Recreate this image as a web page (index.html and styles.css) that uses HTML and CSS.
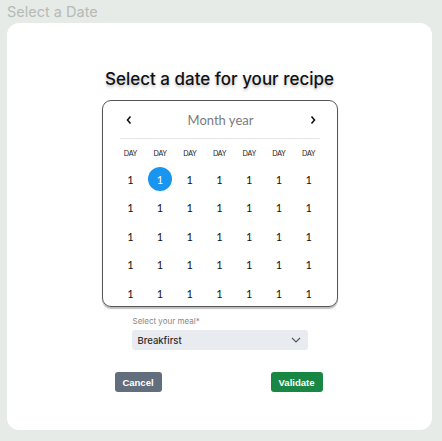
FILE: index.html
```html
<!DOCTYPE html>
<html>
<head>
<meta charset="utf-8">
<link rel="stylesheet" href="styles.css">
</head>
<body>
<div class="page">
  <div class="title">Select a Date</div>
  <div class="card">
    <h1 class="heading">Select a date for your recipe</h1>
    <div class="calendar">
      <div class="cal-head">
        <span class="nav"><svg width="8" height="10" viewBox="0 0 8 10"><path d="M5.5 1.5 L2.5 5 L5.5 8.5" fill="none" stroke="#111" stroke-width="1.6"/></svg></span>
        <span class="month">Month year</span>
        <span class="nav"><svg width="8" height="10" viewBox="0 0 8 10"><path d="M2.5 1.5 L5.5 5 L2.5 8.5" fill="none" stroke="#111" stroke-width="1.6"/></svg></span>
      </div>
      <div class="divider"></div>
      <div class="grid">
        <span class="dow">DAY</span><span class="dow">DAY</span><span class="dow">DAY</span><span class="dow">DAY</span><span class="dow">DAY</span><span class="dow">DAY</span><span class="dow">DAY</span>
        <span class="d">1</span><span class="d"><span class="sel">1</span></span><span class="d">1</span><span class="d">1</span><span class="d">1</span><span class="d">1</span><span class="d">1</span>
        <span class="d">1</span><span class="d">1</span><span class="d">1</span><span class="d">1</span><span class="d">1</span><span class="d">1</span><span class="d">1</span>
        <span class="d">1</span><span class="d">1</span><span class="d">1</span><span class="d">1</span><span class="d">1</span><span class="d">1</span><span class="d">1</span>
        <span class="d">1</span><span class="d">1</span><span class="d">1</span><span class="d">1</span><span class="d">1</span><span class="d">1</span><span class="d">1</span>
        <span class="d">1</span><span class="d">1</span><span class="d">1</span><span class="d">1</span><span class="d">1</span><span class="d">1</span><span class="d">1</span>
      </div>
    </div>
    <div class="meal">
      <label class="meal-label">Select your meal*</label>
      <div class="select">
        <span>Breakfirst</span>
        <svg width="10" height="6" viewBox="0 0 10 6"><path d="M1 1 L5 5 L9 1" fill="none" stroke="#555" stroke-width="1.1"/></svg>
      </div>
    </div>
    <div class="actions">
      <button class="btn cancel">Cancel</button>
      <button class="btn validate">Validate</button>
    </div>
  </div>
</div>
</body>
</html>
```

FILE: styles.css
```css
html, body {
  margin: 0;
  padding: 0;
  background: #e6ebe7;
  height: 100%;
}
.page {
  padding: 0 10px 0 7px;
  font-family: Inter, "Liberation Sans", sans-serif;
}
.title {
  height: 23px;
  line-height: 24px;
  font-size: 14.5px;
  color: #b5bab6;
  font-family: Inter, "Liberation Sans", Arial, sans-serif;
}
.card {
  background: #fff;
  border-radius: 12px;
  height: 407px;
  box-sizing: border-box;
  display: flex;
  flex-direction: column;
  align-items: center;
  padding-top: 44px;
}
.heading {
  margin: 0;
  font-size: 17px;
  line-height: 24px;
  font-weight: 500;
  color: #111;
  text-shadow: 0 2px 3px rgba(0,0,0,0.25);
  font-family: Inter, "Liberation Sans", sans-serif;
}
.calendar {
  margin-top: 9px;
  width: 236px;
  height: 207px;
  box-sizing: border-box;
  border: 1px solid #555;
  border-radius: 9px;
  box-shadow: 0 2px 1px rgba(0,0,0,0.25);
  padding: 0 13px;
  font-family: Lato, "Noto Sans", sans-serif;
}
.cal-head {
  height: 37px;
  display: flex;
  align-items: center;
  justify-content: space-between;
  padding: 0 6px 0 8px;
}
.nav {
  display: flex;
  width: 10px;
  justify-content: center;
}
.month {
  font-size: 13px;
  color: #7b7b7b;
}
.divider {
  height: 1px;
  background: #e4e4e4;
  margin: 0 4px;
}
.grid {
  display: grid;
  grid-template-columns: repeat(7, 1fr);
  grid-template-rows: 24px repeat(5, 28.5px);
  margin-top: 2px;
}
.dow {
  font-size: 7px;
  color: #222;
  display: flex;
  align-items: center;
  justify-content: center;
  letter-spacing: -0.2px;
}
.d {
  font-size: 11px;
  color: #111;
  display: flex;
  align-items: center;
  justify-content: center;
}
.sel {
  width: 24px;
  height: 24px;
  border-radius: 50%;
  background: #1a95ef;
  color: #fff;
  display: flex;
  align-items: center;
  justify-content: center;
}
.meal {
  margin-top: 8px;
  width: 176px;
  display: flex;
  flex-direction: column;
}
.meal-label {
  font-size: 8px;
  color: #888;
  padding-left: 1px;
  line-height: 12px;
}
.select {
  margin-top: 3px;
  height: 20px;
  background: #e8ebef;
  border-radius: 3px;
  display: flex;
  align-items: center;
  justify-content: space-between;
  padding: 0 7px 0 6px;
  font-size: 9.5px;
  font-weight: 500;
  color: #2b2b2b;
}
.actions {
  margin-top: 22px;
  width: 208px;
  display: flex;
  justify-content: space-between;
  padding-right: 2px;
}
.btn {
  border: none;
  height: 20px;
  border-radius: 3px;
  color: #fff;
  font-size: 9.5px;
  font-weight: 600;
  font-family: "Liberation Sans", Arial, sans-serif;
  padding: 0;
}
.cancel {
  width: 47px;
  background: #626d7d;
}
.validate {
  width: 52px;
  background: #198744;
}
```
